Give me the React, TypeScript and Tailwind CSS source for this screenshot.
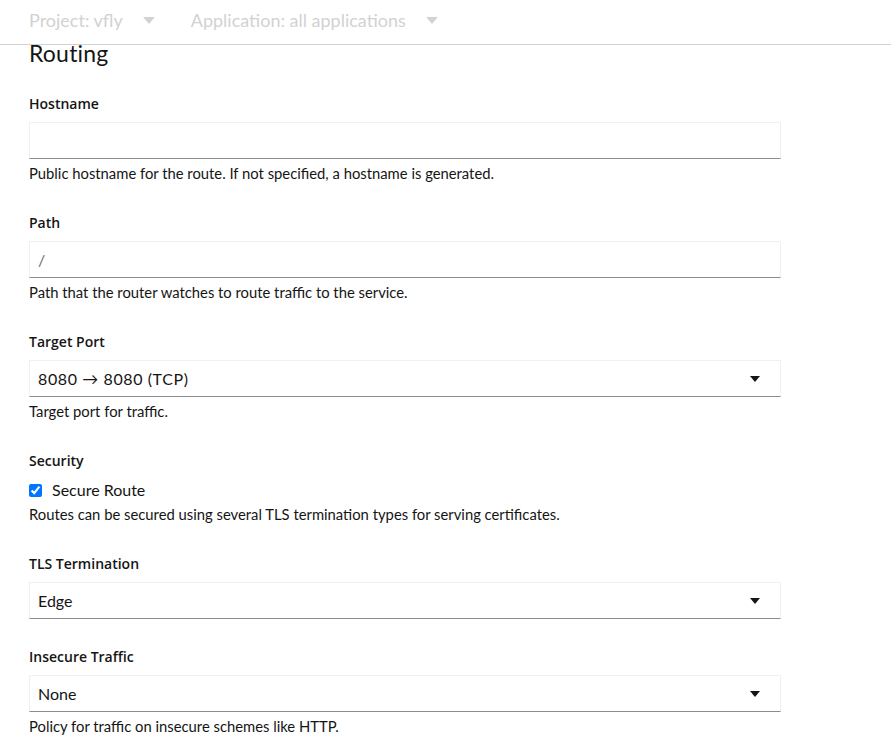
import React from "react";

const font = { fontFamily: "Lato, 'Open Sans', 'Liberation Sans', sans-serif" };
const labelFont = { fontFamily: "'Open Sans', Lato, 'Liberation Sans', sans-serif" };

function Caret({ className }: { className?: string }) {
  return (
    <svg className={className} width="10" height="6" viewBox="0 0 10 6">
      <path d="M0 0 L10 0 L5 6 Z" fill="currentColor" />
    </svg>
  );
}

function Label({ children }: { children: React.ReactNode }) {
  return (
    <div className="text-[14px] leading-[21px] font-semibold text-[#151515] pb-[8px]" style={labelFont}>
      {children}
    </div>
  );
}

function Helper({ children }: { children: React.ReactNode }) {
  return <div className="text-[14.8px] leading-[21px] text-[#151515] mt-[4px]">{children}</div>;
}

function TextInput({ value }: { value?: string }) {
  return (
    <div className="h-[37px] w-[752px] border border-[#f0f0f0] border-b-[#8a8d90] bg-white flex items-center px-[8px] text-[16px] text-[#6a6e73]">
      {value}
    </div>
  );
}

function Select({ value, wide }: { value: string; wide?: boolean }) {
  return (
    <div className="h-[37px] w-[752px] border border-[#f0f0f0] border-b-[#8a8d90] bg-white flex items-center justify-between pl-[8px] pr-[20px] text-[16px] text-[#151515]">
      <span className={wide ? "tracking-[0.6px]" : ""}>{value}</span>
      <Caret className="text-[#151515]" />
    </div>
  );
}

export default function App() {
  return (
    <div className="w-[891px] h-[745px] bg-white overflow-hidden" style={font}>
      <div className="h-[45px] border-b border-[#d2d2d2] flex items-center pb-[4px] pl-[29px] text-[18px] text-[#d2d2d2]">
        <span>Project: vfly</span>
        <Caret className="ml-[20px] w-[12px] h-[7px] text-[#d2d2d2]" />
        <span className="ml-[36px]">Application: all applications</span>
        <Caret className="ml-[20px] w-[12px] h-[7px] text-[#d2d2d2]" />
      </div>
      <div className="pl-[29px]">
        <h1 className="text-[23px] leading-[28px] text-[#151515] mt-[-6px] tracking-[0.2px]">Routing</h1>
        <div className="flex flex-col mt-[26px]">
          <div>
            <Label>Hostname</Label>
            <TextInput />
            <Helper>Public hostname for the route. If not specified, a hostname is generated.</Helper>
          </div>
          <div className="mt-[28px]">
            <Label>Path</Label>
            <TextInput value="/" />
            <Helper>Path that the router watches to route traffic to the service.</Helper>
          </div>
          <div className="mt-[28px]">
            <Label>Target Port</Label>
            <Select value="8080 → 8080 (TCP)" wide />
            <Helper>Target port for traffic.</Helper>
          </div>
          <div className="mt-[28px]">
            <Label>Security</Label>
            <label className="flex items-center h-[21px] text-[16px] text-[#151515]">
              <input type="checkbox" checked readOnly className="w-[13px] h-[13px] m-0 mr-[10px] mt-[2px]" />
              Secure Route
            </label>
            <Helper>Routes can be secured using several TLS termination types for serving certificates.</Helper>
          </div>
          <div className="mt-[28px]">
            <Label>TLS Termination</Label>
            <Select value="Edge" />
          </div>
          <div className="mt-[27px]">
            <Label>Insecure Traffic</Label>
            <Select value="None" />
            <Helper>Policy for traffic on insecure schemes like HTTP.</Helper>
          </div>
        </div>
      </div>
    </div>
  );
}
